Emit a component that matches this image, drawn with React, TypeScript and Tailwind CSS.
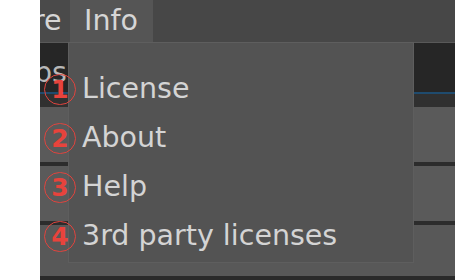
const font = { fontFamily: '"DejaVu Sans", "Liberation Sans", sans-serif' };

const items = ["License", "About", "Help", "3rd party licenses"];

function Circled({ n }: { n: number }) {
  return (
    <div className="absolute left-[-25px] top-[10px] flex h-[31px] w-[32px] items-center justify-center rounded-full border-[1.5px] border-[#e0443e]">
      <span className="text-[25px] font-bold leading-none text-[#e8433c]">{n}</span>
    </div>
  );
}

function Strip() {
  return (
    <div className="flex h-full flex-col">
      <div className="flex h-[51px] flex-col justify-end bg-[#262626]">
        <div className="h-[2px] bg-[#1f4b6e]" />
      </div>
      <div className="h-[13px] bg-[#303030]" />
      <div className="h-[55px] bg-[#5a5a5a]" />
      <div className="h-[4px] bg-[#2c2c2c]" />
      <div className="h-[55px] bg-[#5a5a5a]" />
      <div className="h-[4px] bg-[#2c2c2c]" />
      <div className="h-[51px] bg-[#585858]" />
      <div className="flex-1 bg-[#2a2a2a]" />
    </div>
  );
}

export default function App() {
  return (
    <div className="flex h-[280px] w-[455px] bg-white" style={font}>
      <div className="w-[40px]" />
      <div className="relative flex flex-1 flex-col overflow-hidden bg-[#474747]">
        <div className="flex h-[42px] shrink-0 text-[28.5px] text-[#d6d6d6]">
          <div className="flex w-[30px] items-center overflow-hidden bg-[#4a4a4a]">
            <span className="ml-[-7px] leading-none">re</span>
          </div>
          <div className="flex w-[83px] items-center bg-[#555555] pl-[14px]">
            <span className="leading-none">Info</span>
          </div>
        </div>
        <div className="h-[1px] bg-[#595959]" />
        <div className="relative flex-1">
          <Strip />
          <span className="absolute left-[-6px] top-[16px] text-[28.5px] leading-none text-[#b8b8b8]">ps</span>
        </div>

        <div className="absolute left-[28px] top-[42px] w-[346px] border border-[#5e5e5e] bg-[#535353] pb-[2px] pt-[21px]">
          {items.map((t, i) => (
            <div key={t} className="relative h-[49px] pl-[13px] text-[28.5px] leading-[49px] text-[#d4d4d4]">
              <Circled n={i + 1} />
              {t}
            </div>
          ))}
        </div>
      </div>
    </div>
  );
}
